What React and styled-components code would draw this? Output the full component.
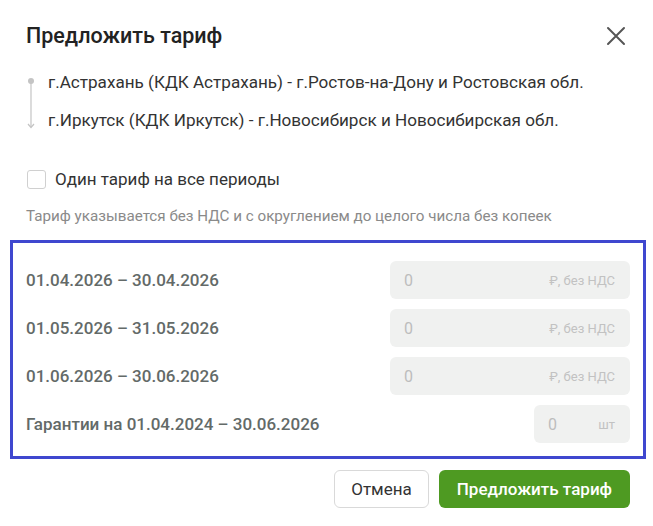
import React, { useState } from "react";
import styled, { createGlobalStyle } from "styled-components";

const GlobalStyle = createGlobalStyle`
  body {
    margin: 0;
    background: #ffffff;
    font-family: Roboto, "Liberation Sans", sans-serif;
  }
  * { box-sizing: border-box; }
`;

const periods = [
  { label: "01.04.2026 – 30.04.2026", unit: "₽, без НДС", wide: true },
  { label: "01.05.2026 – 31.05.2026", unit: "₽, без НДС", wide: true },
  { label: "01.06.2026 – 30.06.2026", unit: "₽, без НДС", wide: true },
  { label: "Гарантии на 01.04.2024 – 30.06.2026", unit: "шт", wide: false },
];

const App = () => {
  const [single, setSingle] = useState(false);

  return (
    <>
      <GlobalStyle />
      <Dialog>
        <Header>
          <Title>Предложить тариф</Title>
          <CloseButton aria-label="Закрыть">
            <svg width="22" height="22" viewBox="0 0 22 22">
              <path
                d="M3 3 L19 19 M19 3 L3 19"
                stroke="#555"
                strokeWidth="2"
                strokeLinecap="round"
              />
            </svg>
          </CloseButton>
        </Header>

        <Route>
          <RouteLine>
            <svg width="10" height="54" viewBox="0 0 10 54">
              <circle cx="5" cy="4" r="3" fill="#c4c4c4" />
              <path d="M5 6 V50" stroke="#c4c4c4" strokeWidth="1.2" />
              <path
                d="M2 47 L5 50.5 L8 47"
                stroke="#c4c4c4"
                strokeWidth="1.2"
                fill="none"
              />
            </svg>
          </RouteLine>
          <RouteList>
            <RouteItem>г.Астрахань (КДК Астрахань) - г.Ростов-на-Дону и Ростовская обл.</RouteItem>
            <RouteItem>г.Иркутск (КДК Иркутск) - г.Новосибирск и Новосибирская обл.</RouteItem>
          </RouteList>
        </Route>

        <CheckRow onClick={() => setSingle(!single)}>
          <Checkbox checked={single} />
          <CheckLabel>Один тариф на все периоды</CheckLabel>
        </CheckRow>

        <Hint>Тариф указывается без НДС и с округлением до целого числа без копеек</Hint>

        <Periods>
          {periods.map((p) => (
            <PeriodRow key={p.label}>
              <PeriodLabel>{p.label}</PeriodLabel>
              <Field wide={p.wide}>
                <FieldValue>0</FieldValue>
                <FieldUnit>{p.unit}</FieldUnit>
              </Field>
            </PeriodRow>
          ))}
        </Periods>

        <Footer>
          <CancelButton>Отмена</CancelButton>
          <SubmitButton>Предложить тариф</SubmitButton>
        </Footer>
      </Dialog>
    </>
  );
};

const Dialog = styled.div`
  width: 653px;
  height: 526px;
  padding: 21px 23px 0 26px;
  background: #fff;
  display: flex;
  flex-direction: column;
`;

const Header = styled.div`
  display: flex;
  justify-content: space-between;
  align-items: center;
  height: 30px;
`;

const Title = styled.h2`
  margin: 0;
  font-size: 21.5px;
  font-weight: 500;
  color: #222;
  line-height: 30px;
`;

const CloseButton = styled.button`
  border: none;
  background: transparent;
  padding: 0;
  margin-right: 3px;
  display: flex;
  cursor: pointer;
`;

const Route = styled.div`
  display: flex;
  margin-top: 21px;
`;

const RouteLine = styled.div`
  width: 22px;
  padding-top: 5px;
  display: flex;
`;

const RouteList = styled.div`
  display: flex;
  flex-direction: column;
  gap: 17px;
`;

const RouteItem = styled.div`
  font-size: 17.1px;
  line-height: 21px;
  color: #333;
`;

const CheckRow = styled.label`
  display: flex;
  align-items: center;
  gap: 9px;
  margin-top: 37px;
  cursor: pointer;
`;

const Checkbox = styled.span`
  width: 19px;
  height: 19px;
  border: 1px solid #d0d0d0;
  border-radius: 3px;
  margin-left: 1px;
  background: ${(props) => (props.checked ? "#4e9a22" : "#fff")};
`;

const CheckLabel = styled.span`
  font-size: 17px;
  color: #333;
  line-height: 22px;
`;

const Hint = styled.div`
  margin-top: 16px;
  font-size: 15.2px;
  line-height: 20px;
  color: #8a8a8a;
`;

const Periods = styled.div`
  margin: 14px -16px 0;
  border: 3px solid #3f47cf;
  padding: 18px 13px 13px;
  display: flex;
  flex-direction: column;
  gap: 10px;
`;

const PeriodRow = styled.div`
  display: flex;
  justify-content: space-between;
  align-items: center;
`;

const PeriodLabel = styled.div`
  font-size: 17px;
  font-weight: 500;
  color: #636a68;
`;

const Field = styled.div`
  width: ${(props) => (props.wide ? "240px" : "96px")};
  height: 38px;
  border-radius: 6px;
  background: #f0f1f0;
  display: flex;
  align-items: center;
  justify-content: space-between;
  padding: 0 15px 0 14px;
`;

const FieldValue = styled.span`
  font-size: 16px;
  color: #bdbdbd;
`;

const FieldUnit = styled.span`
  font-size: 13px;
  color: #c2c2c2;
`;

const Footer = styled.div`
  display: flex;
  justify-content: flex-end;
  gap: 10px;
  margin-top: 11px;
`;

const CancelButton = styled.button`
  height: 38px;
  padding: 0 16px;
  border: 1px solid #d9d9d9;
  border-radius: 6px;
  background: #fff;
  font-family: inherit;
  font-size: 17px;
  color: #333;
  cursor: pointer;
`;

const SubmitButton = styled.button`
  height: 38px;
  padding: 0 18px;
  border: none;
  border-radius: 6px;
  background: #4e9a22;
  font-family: inherit;
  font-size: 17px;
  font-weight: 500;
  color: #fff;
  cursor: pointer;
`;

export default App;
